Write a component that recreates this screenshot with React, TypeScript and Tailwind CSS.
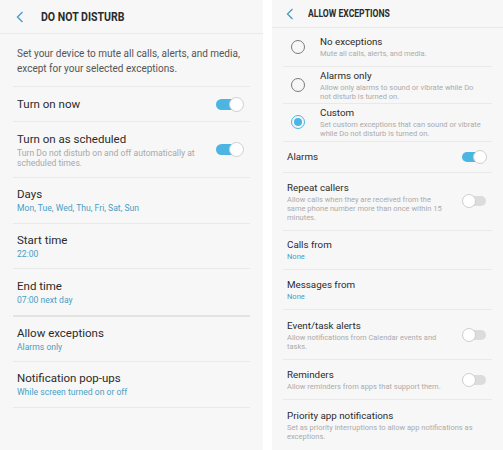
import React from 'react'

const font = { fontFamily: 'Roboto, "Liberation Sans", sans-serif' }

function Toggle({ on, size = 'lg' }: { on: boolean; size?: 'lg' | 'sm' }) {
  const big = size === 'lg'
  return (
    <div className={`relative shrink-0 ${big ? 'w-[28px] h-[15px]' : 'w-[25px] h-[14px]'}`}>
      <div
        className={`absolute left-0 right-[1px] top-[2px] bottom-[2px] rounded-full ${
          on ? 'bg-[#4db5e1]' : 'bg-[#dcdcdc]'
        }`}
      />
      <div
        className={`absolute top-0 rounded-full bg-white border border-[#cfcfcf] ${big ? 'w-[15px] h-[15px]' : 'w-[14px] h-[14px]'} ${
          on ? 'right-0' : 'left-0'
        }`}
      />
    </div>
  )
}

function Radio({ checked }: { checked: boolean }) {
  return checked ? (
    <div className="w-[14px] h-[14px] rounded-full border-[1.5px] border-[#4db5e1] flex items-center justify-center shrink-0">
      <div className="w-[8px] h-[8px] rounded-full bg-[#4db5e1]" />
    </div>
  ) : (
    <div className="w-[14px] h-[14px] rounded-full border-[1.5px] border-[#7a7a7a] shrink-0" />
  )
}

function Chevron() {
  return (
    <svg width="8" height="12" viewBox="0 0 8 12" fill="none">
      <path d="M6.5 1 L1.5 6 L6.5 11" stroke="#4a9fc4" strokeWidth="1.4" />
    </svg>
  )
}

interface LeftRowProps {
  title: string
  sub?: string
  grey?: string[]
  toggle?: boolean
  h: number
  thick?: boolean
}

function LeftRow({ title, sub, grey, toggle, h, thick }: LeftRowProps) {
  return (
    <div
      className={`mx-[13px] flex items-center pl-[4px] pr-[6px] ${thick ? 'border-b-2 border-[#e3e3e3]' : 'border-b border-[#e9e9e9]'}`}
      style={{ height: h }}
    >
      <div className="flex-1 min-w-0">
        <div className="text-[11.5px] leading-[15px] text-[#2b2b2b]">{title}</div>
        {sub && <div className="mt-[1px] text-[8.6px] leading-[11px] text-[#4a9ec4]">{sub}</div>}
        {grey && (
          <div className="mt-[1px] text-[8.6px] leading-[10px] text-[#a8a8a8]">
            {grey.map((g) => (
              <div key={g}>{g}</div>
            ))}
          </div>
        )}
      </div>
      {toggle !== undefined && <Toggle on={toggle} />}
    </div>
  )
}

interface RightRowProps {
  title: string
  sub?: string
  grey?: string[]
  toggle?: boolean
  radio?: boolean
  h: number
  last?: boolean
}

function RightRow({ title, sub, grey, toggle, radio, h, last }: RightRowProps) {
  return (
    <div
      className={`mx-[11px] flex items-center pl-[4px] pr-[5px] ${last ? '' : 'border-b border-[#e9e9e9]'}`}
      style={{ height: h }}
    >
      {radio !== undefined && (
        <div className="w-[33px] shrink-0 flex pl-[4px]">
          <Radio checked={radio} />
        </div>
      )}
      <div className="flex-1 min-w-0">
        <div className="text-[9.8px] leading-[13px] text-[#2b2b2b]">{title}</div>
        {sub && <div className="mt-[1px] text-[7.5px] leading-[10px] text-[#4a9ec4]">{sub}</div>}
        {grey && (
          <div className="mt-[1px] text-[7.5px] leading-[9px] text-[#ababab] whitespace-nowrap">
            {grey.map((g) => (
              <div key={g}>{g}</div>
            ))}
          </div>
        )}
      </div>
      {toggle !== undefined && <Toggle on={toggle} size="sm" />}
    </div>
  )
}

export default function App() {
  return (
    <div className="w-[503px] h-[450px] bg-white flex overflow-hidden" style={font}>
      {/* Do not disturb */}
      <div className="w-[263px] shrink-0 bg-[#f7f7f7] flex flex-col">
        <div className="h-[34px] shrink-0 flex items-center border-b border-[#e9e9e9] pl-[16px]">
          <Chevron />
          <span className="ml-[17px] text-[12px] font-bold text-[#2b2b2b] inline-block origin-left scale-x-[0.88] whitespace-nowrap">
            DO NOT DISTURB
          </span>
        </div>
        <div className="mx-[13px] pl-[4px] pt-[12px] h-[53px] shrink-0 border-b border-[#e9e9e9] text-[10px] leading-[15px] text-[#555] whitespace-nowrap">
          Set your device to mute all calls, alerts, and media,
          <br />
          except for your selected exceptions.
        </div>
        <LeftRow title="Turn on now" toggle h={35} />
        <LeftRow
          title="Turn on as scheduled"
          grey={['Turn Do not disturb on and off automatically at', 'scheduled times.']}
          toggle
          h={56}
        />
        <LeftRow title="Days" sub="Mon, Tue, Wed, Thu, Fri, Sat, Sun" h={46} />
        <LeftRow title="Start time" sub="22:00" h={45} />
        <LeftRow title="End time" sub="07:00 next day" h={48} thick />
        <LeftRow title="Allow exceptions" sub="Alarms only" h={45} />
        <LeftRow title="Notification pop-ups" sub="While screen turned on or off" h={46} />
      </div>

      <div className="w-[9px] shrink-0 bg-white" />

      {/* Allow exceptions */}
      <div className="flex-1 bg-[#f7f7f7] flex flex-col">
        <div className="h-[28px] shrink-0 flex items-center border-b border-[#e9e9e9] pl-[14px]">
          <Chevron />
          <span className="ml-[14px] text-[10.5px] font-bold text-[#2b2b2b] inline-block origin-left scale-x-[0.82] whitespace-nowrap">
            ALLOW EXCEPTIONS
          </span>
        </div>
        <RightRow title="No exceptions" grey={['Mute all calls, alerts, and media.']} radio={false} h={39} />
        <RightRow
          title="Alarms only"
          grey={['Allow only alarms to sound or vibrate while Do', 'not disturb is turned on.']}
          radio={false}
          h={37}
        />
        <RightRow
          title="Custom"
          grey={['Set custom exceptions that can sound or vibrate', 'while Do not disturb is turned on.']}
          radio
          h={38}
        />
        <RightRow title="Alarms" toggle h={31} />
        <RightRow
          title="Repeat callers"
          grey={['Allow calls when they are received from the', 'same phone number more than once within 15', 'minutes.']}
          toggle={false}
          h={58}
        />
        <RightRow title="Calls from" sub="None" h={40} />
        <RightRow title="Messages from" sub="None" h={40} />
        <RightRow
          title="Event/task alerts"
          grey={['Allow notifications from Calendar events and', 'tasks.']}
          toggle={false}
          h={50}
        />
        <RightRow title="Reminders" grey={['Allow reminders from apps that support them.']} toggle={false} h={40} />
        <RightRow
          title="Priority app notifications"
          grey={['Set as priority interruptions to allow app notifications as', 'exceptions.']}
          h={50}
          last
        />
      </div>
    </div>
  )
}
